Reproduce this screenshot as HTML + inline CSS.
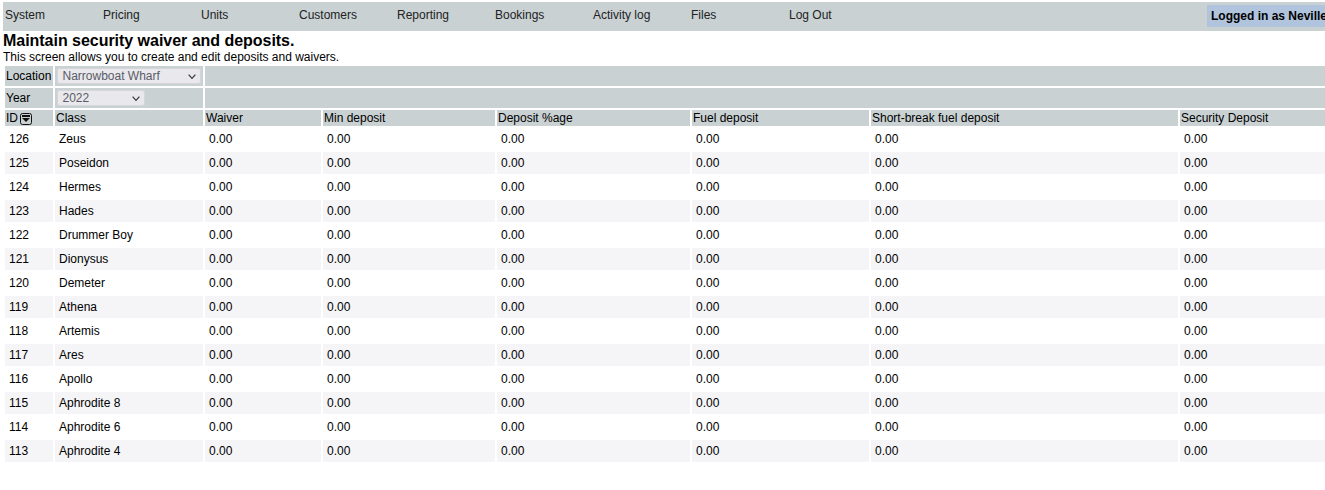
<!DOCTYPE html>
<html><head><meta charset="utf-8">
<style>
html,body{margin:0;padding:0;background:#fff;overflow:hidden;width:1325px;height:490px;}
body{font-family:"Liberation Sans",sans-serif;font-size:12px;color:#000;position:relative;}
#nav{position:absolute;left:3px;top:2px;width:1600px;height:29px;background:#c9d1d3;}
#nav span{position:absolute;top:7px;line-height:12px;color:#222;white-space:nowrap;}
#login{position:absolute;left:1207px;top:5px;height:22px;width:400px;background:#b0c4de;}
#login b{position:absolute;left:4px;top:5px;line-height:12px;font-weight:bold;color:#000;white-space:nowrap;}
h1{position:absolute;left:3px;top:32px;margin:0;font-size:16px;letter-spacing:-0.03px;line-height:18px;font-weight:bold;white-space:nowrap;}
#sub{position:absolute;left:3px;top:51px;line-height:12px;white-space:nowrap;}
table{position:absolute;left:3px;top:64px;border-collapse:separate;border-spacing:2px;table-layout:fixed;width:1579px;}
td{padding:0;vertical-align:middle;white-space:nowrap;overflow:hidden;}
tr.f td{height:20px;background:#c9d1d3;}
tr.h td{height:16px;background:#c9d1d3;padding-left:1px;}
tr.d td{height:22px;}
tr.d td span{padding-left:4px;}
tr.d:nth-child(odd) td{background:#f5f5f7;}
.sel{display:block;margin-left:2px;height:16px;background:#e9e9ed;border-radius:3px;position:relative;color:#5b5b66;box-shadow:inset 0 0 0 1px #d5d5da;}
.sel i{font-style:normal;position:absolute;left:5.5px;top:2px;line-height:12px;}
.sel svg{position:absolute;top:6px;}
</style></head><body>
<div id="nav">
<span style="left:2px">System</span>
<span style="left:100px">Pricing</span>
<span style="left:198px">Units</span>
<span style="left:296px">Customers</span>
<span style="left:394px">Reporting</span>
<span style="left:492px">Bookings</span>
<span style="left:590px">Activity log</span>
<span style="left:688px">Files</span>
<span style="left:786px">Log Out</span>
</div>
<div id="login"><b>Logged in as Neville</b></div>
<h1>Maintain security waiver and deposits.</h1>
<div id="sub">This screen allows you to create and edit deposits and waivers.</div>
<table>
<colgroup><col style="width:48px"><col style="width:148px"><col style="width:116px"><col style="width:172px"><col style="width:193px"><col style="width:177px"><col style="width:307px"><col style="width:400px"></colgroup>
<tr class="f"><td style="padding-left:1px">Location</td><td><div class="sel" style="width:144px"><i>Narrowboat Wharf</i><svg style="left:131px" width="8" height="6" viewBox="0 0 8 6"><path d="M0.6 0.6 L4 4.4 L7.4 0.6" fill="none" stroke="#3c3c44" stroke-width="1.3"/></svg></div></td><td colspan="6"></td></tr>
<tr class="f"><td style="padding-left:1px">Year</td><td><div class="sel" style="width:88px"><i>2022</i><svg style="left:75px" width="8" height="6" viewBox="0 0 8 6"><path d="M0.6 0.6 L4 4.4 L7.4 0.6" fill="none" stroke="#3c3c44" stroke-width="1.3"/></svg></div></td><td colspan="6"></td></tr>
<tr class="h"><td>ID <svg width="12" height="12" viewBox="0 0 12 12" style="vertical-align:-3px;margin-left:-1px"><rect x="0.5" y="0.5" width="11" height="11" rx="2" fill="none" stroke="#111"/><rect x="2" y="2" width="8" height="2" fill="#111"/><path d="M2 5 L10 5 L6 9 Z" fill="#111"/></svg></td><td>Class</td><td>Waiver</td><td>Min deposit</td><td>Deposit %age</td><td>Fuel deposit</td><td>Short-break fuel deposit</td><td>Security Deposit</td></tr>
<tr class="d"><td><span>126</span></td><td><span>Zeus</span></td><td><span>0.00</span></td><td><span>0.00</span></td><td><span>0.00</span></td><td><span>0.00</span></td><td><span>0.00</span></td><td><span>0.00</span></td></tr>
<tr class="d"><td><span>125</span></td><td><span>Poseidon</span></td><td><span>0.00</span></td><td><span>0.00</span></td><td><span>0.00</span></td><td><span>0.00</span></td><td><span>0.00</span></td><td><span>0.00</span></td></tr>
<tr class="d"><td><span>124</span></td><td><span>Hermes</span></td><td><span>0.00</span></td><td><span>0.00</span></td><td><span>0.00</span></td><td><span>0.00</span></td><td><span>0.00</span></td><td><span>0.00</span></td></tr>
<tr class="d"><td><span>123</span></td><td><span>Hades</span></td><td><span>0.00</span></td><td><span>0.00</span></td><td><span>0.00</span></td><td><span>0.00</span></td><td><span>0.00</span></td><td><span>0.00</span></td></tr>
<tr class="d"><td><span>122</span></td><td><span>Drummer Boy</span></td><td><span>0.00</span></td><td><span>0.00</span></td><td><span>0.00</span></td><td><span>0.00</span></td><td><span>0.00</span></td><td><span>0.00</span></td></tr>
<tr class="d"><td><span>121</span></td><td><span>Dionysus</span></td><td><span>0.00</span></td><td><span>0.00</span></td><td><span>0.00</span></td><td><span>0.00</span></td><td><span>0.00</span></td><td><span>0.00</span></td></tr>
<tr class="d"><td><span>120</span></td><td><span>Demeter</span></td><td><span>0.00</span></td><td><span>0.00</span></td><td><span>0.00</span></td><td><span>0.00</span></td><td><span>0.00</span></td><td><span>0.00</span></td></tr>
<tr class="d"><td><span>119</span></td><td><span>Athena</span></td><td><span>0.00</span></td><td><span>0.00</span></td><td><span>0.00</span></td><td><span>0.00</span></td><td><span>0.00</span></td><td><span>0.00</span></td></tr>
<tr class="d"><td><span>118</span></td><td><span>Artemis</span></td><td><span>0.00</span></td><td><span>0.00</span></td><td><span>0.00</span></td><td><span>0.00</span></td><td><span>0.00</span></td><td><span>0.00</span></td></tr>
<tr class="d"><td><span>117</span></td><td><span>Ares</span></td><td><span>0.00</span></td><td><span>0.00</span></td><td><span>0.00</span></td><td><span>0.00</span></td><td><span>0.00</span></td><td><span>0.00</span></td></tr>
<tr class="d"><td><span>116</span></td><td><span>Apollo</span></td><td><span>0.00</span></td><td><span>0.00</span></td><td><span>0.00</span></td><td><span>0.00</span></td><td><span>0.00</span></td><td><span>0.00</span></td></tr>
<tr class="d"><td><span>115</span></td><td><span>Aphrodite 8</span></td><td><span>0.00</span></td><td><span>0.00</span></td><td><span>0.00</span></td><td><span>0.00</span></td><td><span>0.00</span></td><td><span>0.00</span></td></tr>
<tr class="d"><td><span>114</span></td><td><span>Aphrodite 6</span></td><td><span>0.00</span></td><td><span>0.00</span></td><td><span>0.00</span></td><td><span>0.00</span></td><td><span>0.00</span></td><td><span>0.00</span></td></tr>
<tr class="d"><td><span>113</span></td><td><span>Aphrodite 4</span></td><td><span>0.00</span></td><td><span>0.00</span></td><td><span>0.00</span></td><td><span>0.00</span></td><td><span>0.00</span></td><td><span>0.00</span></td></tr>
</table>
</body></html>
